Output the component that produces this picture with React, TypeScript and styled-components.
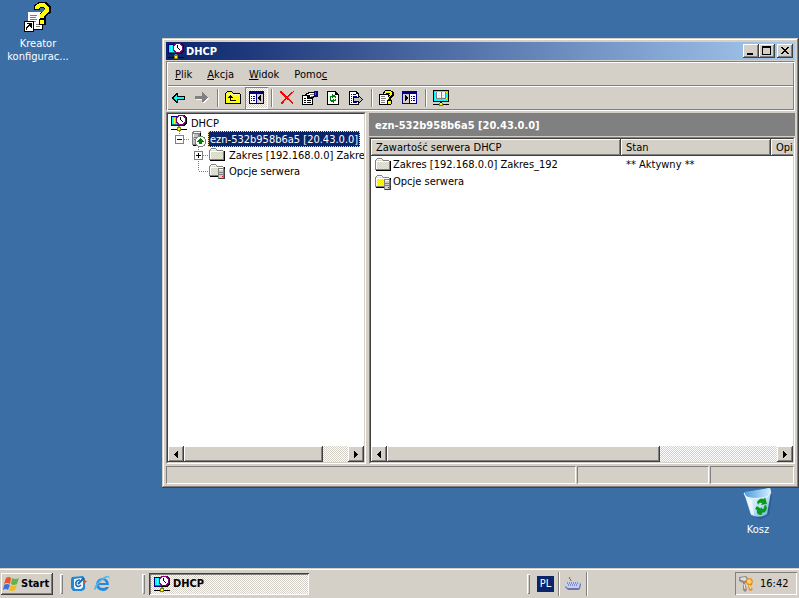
import React from "react";
import styled, { createGlobalStyle, css } from "styled-components";

const face = "#d4d0c8";
const shadow = "#808080";
const dark = "#404040";
const navy = "#0a246a";

const GlobalStyle = createGlobalStyle`
  * { box-sizing: border-box; }
  body {
    margin: 0;
    background: #3a6ea5;
    color: #000;
    font: 11px/16px "DejaVu Sans Condensed", "DejaVu Sans", sans-serif;
    overflow: hidden;
  }
  button { font: inherit; color: inherit; padding: 0; margin: 0; border: 0; background: none; border-radius: 0; }
  svg { display: block; flex: none; }
`;

const raised = css`
  background-color: ${face};
  box-shadow: inset -1px -1px ${dark}, inset 1px 1px #fff, inset -2px -2px ${shadow};
`;

const dither = css`
  background: repeating-conic-gradient(#fff 0 25%, ${face} 0 50%) 0 0 / 2px 2px;
`;

const sunken = css`
  border: 1px solid ${shadow};
  border-right-color: #fff;
  border-bottom-color: #fff;
`;

const Screen = styled.div`
  display: flex;
  flex-direction: column;
  height: 100vh;
`;

const Desktop = styled.main`
  position: relative;
  flex: 1;
  min-height: 0;
`;

const Shortcut = styled.a<{ $corner: "start" | "end" }>`
  position: absolute;
  ${(p) => (p.$corner === "start" ? "left: 0; top: 2px;" : "right: 3px; bottom: 32px;")}
  width: 76px;
  display: flex;
  flex-direction: column;
  align-items: center;
  gap: 3px;
  color: #fff;
  text-align: center;
  text-decoration: none;
  line-height: 13px;
`;

const Window = styled.section`
  position: absolute;
  inset: 38px 0 80px 162px;
  display: flex;
  flex-direction: column;
  padding: 4px;
  background: ${face};
  box-shadow: inset -1px -1px ${dark}, inset 1px 1px ${face}, inset -2px -2px ${shadow}, inset 2px 2px #fff;
`;

const TitleBar = styled.header`
  display: flex;
  align-items: center;
  height: 18px;
  padding: 0 2px;
  gap: 2px;
  background: linear-gradient(90deg, ${navy}, #a6caf0);
`;

const Title = styled.h1`
  flex: 1;
  margin: 0;
  padding-top: 2px;
  color: #fff;
  font-size: 11px;
  font-weight: bold;
`;

const CaptionButtons = styled.div`
  display: flex;
`;

const CaptionButton = styled.button<{ $apart?: boolean }>`
  ${raised}
  width: 16px;
  height: 14px;
  margin-left: ${(p) => (p.$apart ? 2 : 0)}px;
`;

const Bars = styled.div`
  ${sunken}
  margin-top: 1px;
  box-shadow: inset 1px 1px #fff, inset -1px -1px ${shadow};
  padding: 1px;
`;

const MenuBar = styled.nav`
  display: flex;
  align-items: center;
  gap: 1px;
  height: 22px;
`;

const MenuItem = styled.button`
  padding: 2px 7px 0;
  height: 20px;
`;

const ToolBar = styled.div`
  display: flex;
  align-items: center;
  height: 24px;
  border-top: 1px solid ${shadow};
  box-shadow: inset 0 1px #fff;
`;

const ToolButton = styled.button<{ $pressed?: boolean }>`
  display: grid;
  place-items: center;
  width: 23px;
  height: 22px;
  padding-right: 2px;
  ${(p) => p.$pressed && css`${dither} padding-right: 0; box-shadow: inset 1px 1px ${shadow}, inset -1px -1px #fff;`}
`;

const ToolSeparator = styled.span`
  width: 2px;
  height: 18px;
  margin: 0 3px;
  border-left: 1px solid ${shadow};
  border-right: 1px solid #fff;
`;

const Panes = styled.div`
  flex: 1;
  min-height: 0;
  display: grid;
  grid-template-columns: 200px minmax(0, 1fr);
  gap: 3px;
  margin-top: 1px;
`;

const Pane = styled.div`
  ${sunken}
  flex: 1;
  display: flex;
  flex-direction: column;
  min-width: 0;
  min-height: 0;
  background: #fff;
`;

const PaneBody = styled.div`
  flex: 1;
  display: flex;
  flex-direction: column;
  min-height: 0;
  overflow: hidden;
  border: 1px solid ${dark};
  border-right-color: ${face};
  border-bottom-color: ${face};
`;

const RightPane = styled.div`
  display: flex;
  flex-direction: column;
  min-width: 0;
  min-height: 0;
`;

const PaneTitle = styled.h2`
  margin: 1px 0;
  height: 23px;
  padding-left: 6px;
  background: ${shadow};
  color: #fff;
  font-size: 11px;
  line-height: 25px;
`;

const Tree = styled.ul`
  flex: 1;
  min-height: 0;
  margin: 0;
  padding: 1px 0 0 3px;
  list-style: none;
  overflow: hidden;
`;

const TreeRow = styled.li<{ $level: number }>`
  display: flex;
  align-items: center;
  height: 16px;
  padding-left: ${(p) => Math.max(0, p.$level - 1) * 19}px;
  white-space: nowrap;
`;

const TreeLabel = styled.span<{ $selected?: boolean }>`
  height: 16px;
  margin-left: 2px;
  padding: 2px 2px 0;
  line-height: 14px;
  ${(p) => p.$selected && css`background: ${navy}; color: #fff; outline: 1px dotted #f5db95; outline-offset: -1px;`}
`;

const ListArea = styled.div`
  flex: 1;
  min-height: 0;
  overflow: hidden;
`;

const ListTable = styled.table`
  table-layout: fixed;
  border-collapse: collapse;
  width: 100%;
  min-width: 560px;
`;

const HeadCell = styled.th<{ $width?: number }>`
  ${raised}
  width: ${(p) => (p.$width ? `${p.$width}px` : "auto")};
  height: 17px;
  padding: 1px 5px 0;
  text-align: left;
  font-weight: normal;
  line-height: 16px;
`;

const Cell = styled.td`
  height: 17px;
  padding: 1px 5px 0;
  line-height: 16px;
  white-space: nowrap;
`;

const FileCell = styled(Cell)`
  padding-left: 4px;
`;

const FileName = styled.div`
  display: flex;
  align-items: center;
  gap: 2px;
  height: 16px;
`;

const ScrollBar = styled.div`
  display: flex;
  height: 16px;
  ${dither}
`;

const ScrollArrow = styled.button`
  ${raised}
  display: grid;
  place-items: center;
  width: 16px;
  height: 16px;
`;

const Track = styled.div`
  flex: 1;
`;

const Thumb = styled.div<{ $share: number }>`
  ${raised}
  width: ${(p) => p.$share}%;
  height: 16px;
`;

const StatusBar = styled.footer`
  display: grid;
  grid-template-columns: minmax(0, 1fr) 132px 84px;
  gap: 1px;
  height: 18px;
  margin-top: 2px;
  padding-right: 1px;
`;

const StatusCell = styled.div`
  ${sunken}
`;

const TaskBar = styled.footer`
  display: flex;
  align-items: center;
  height: 30px;
  padding: 1px 2px 0 1px;
  background: ${face};
  box-shadow: inset 0 1px ${face}, inset 0 2px #fff;
`;

const StartButton = styled.button`
  ${raised}
  display: flex;
  align-items: center;
  gap: 2px;
  width: 52px;
  height: 22px;
  padding-left: 2px;
  font-weight: bold;
`;

const Grip = styled.span`
  width: 3px;
  height: 20px;
  margin: 0 7px;
  box-shadow: inset 1px 1px #fff, inset -1px -1px ${shadow};
`;

const QuickLaunch = styled.div`
  display: flex;
  align-items: center;
  gap: 7px;
  width: 65px;
`;

const TaskButton = styled.button`
  ${dither}
  display: flex;
  align-items: center;
  gap: 3px;
  width: 160px;
  height: 22px;
  margin-left: -3px;
  padding-left: 5px;
  font-weight: bold;
  box-shadow: inset 1px 1px ${dark}, inset -1px -1px #fff, inset 2px 2px ${shadow};
`;

const Spacer = styled.div`
  flex: 1;
`;

const LanguageBar = styled.div`
  display: flex;
  align-items: center;
`;

const Language = styled.button`
  width: 17px;
  height: 16px;
  margin-right: 4px;
  background: ${navy};
  color: #fff;
  text-align: center;
`;

const KeyboardSlot = styled.div`
  display: grid;
  place-items: center;
  width: 29px;
  height: 24px;
  border-left: 1px solid ${shadow};
  border-right: 1px solid ${shadow};
  box-shadow: inset 1px 0 #fff, 1px 0 #fff;
`;

const Tray = styled.div`
  display: flex;
  align-items: center;
  gap: 6px;
  width: 62px;
  height: 23px;
  margin-left: 148px;
  padding-left: 3px;
  box-shadow: inset 1px 1px ${shadow}, inset -1px -1px #fff;
`;

const HiddenDefs = styled.svg`
  position: absolute;
`;

type ArtProps = { w: number; h: number; children: React.ReactNode };
const Art = ({ w, h, children }: ArtProps) => (
  <svg width={w} height={h} viewBox={`0 0 ${w} ${h}`} shapeRendering="crispEdges" aria-hidden="true">
    {children}
  </svg>
);

const Patterns = () => (
  <HiddenDefs width="0" height="0" aria-hidden="true">
    <defs>
      <pattern id="folderFill" width="2" height="2" patternUnits="userSpaceOnUse">
        <path fill="#ffff00" d="M0 0h2v2H0z" />
        <path fill="#d8d8c8" d="M0 0h1v1H0zM1 1h1v1H1z" />
      </pattern>
      <linearGradient id="binFill" x1="0" y1="0" x2="1" y2="1">
        <stop offset="0" stopColor="#f4fcff" />
        <stop offset="0.55" stopColor="#c4e6f9" />
        <stop offset="1" stopColor="#5fa6dc" />
      </linearGradient>
      <linearGradient id="binMouth" x1="0" y1="0" x2="1" y2="0">
        <stop offset="0" stopColor="#4a9be0" />
        <stop offset="1" stopColor="#d4effc" />
      </linearGradient>
    </defs>
  </HiddenDefs>
);

const DhcpIcon = () => (
  <Art w={16} h={16}>
    <path fill="#000080" d="M0 1h9v10H0z" />
    <path fill="#00ffff" d="M1 2h8v8H1z" />
    <path fill="#ffff00" d="M3 3h1v6H3z" />
    <path fill="#008080" d="M1 9h6v1H1z" />
    <path fill="#000" d="M8 0h6v1h1v1h1v7h-1v1h-1v1H8v-1H7V9H6V2h1V1h1z" />
    <path fill="#800080" d="M7 0h6v1h1v1h1v6h-1v1h-1v1H7V9H6V8H5V2h1V1h1z" />
    <path fill="#fff" d="M8 1h4v1h1v1h1v4h-1v1h-1v1H8V8H7V7H6V3h1V2h1z" />
    <path fill="#000" d="M9 2h1v3H9zM10 5h1v1h-1zM11 6h1v1h-1z" />
    <path fill="#808080" d="M7 11h2v1H7z" />
    <path fill="#000" d="M0 14h16v1H0z" />
    <path fill="#808000" d="M6 12h4v4H6z" />
    <path fill="#ffff00" d="M7 13h2v2H7z" />
  </Art>
);

const ServerIcon = () => (
  <Art w={16} h={16}>
    <path fill="#808080" d="M3 0h7l1 1v13H2V2z" />
    <path fill="#c0c0c0" d="M3 3h6v10H3z" />
    <path fill="#fff" d="M4 1h6v1H4zM3 3h1v3H3z" />
    <path fill="#808080" d="M4 6h4v1H4zM4 8h4v1H4zM8 3h1v10H8z" />
    <path fill="#000" d="M10 2h1v4h-1zM3 14h4v1H3z" />
    <path fill="#808080" d="M8 5h5v1h2v2h1v5h-1v2h-2v1H8v-1H6v-2H5V8h1V6h2z" />
    <path fill="#fff" d="M8 6h5v1h1v1h1v5h-1v1h-1v1H8v-1H7v-1H6V8h1V7h1z" />
    <path fill="#008000" d="M10 7h1v1h1v1h1v1h1v1h-2v2H9v-2H7v-1h1V9h1V8h1z" />
  </Art>
);

const FolderIcon = ({ server }: { server?: boolean }) => (
  <Art w={16} h={16}>
    <path fill="#808080" d="M1 2h1V1h5v1h1v1h6v1h1v9H0V3h1z" />
    <path fill="url(#folderFill)" d="M2 2h5v1h1v1h6v8H1V3h1z" />
    <path fill="#fff" d="M2 2h5v1H2zM1 4h13v1H2v7H1z" />
    <path fill="#000" d="M15 4h1v10H1v-1h14z" />
    {server && (
      <>
        <path fill="#808080" d="M9 5h6v1h1v9h-1v1H9z" />
        <path fill="#d4d0c8" d="M10 6h4v9h-4z" />
        <path fill="#fff" d="M10 6h4v1h-4z" />
        <path fill="#808080" d="M10 9h4v1h-4zM10 11h4v1h-4z" />
        <path fill="#f00" d="M13 13h1v1h-1z" />
        <path fill="#404040" d="M15 6h1v10h-6v-1h5z" />
      </>
    )}
  </Art>
);

const BackIcon = () => (
  <Art w={13} h={10}>
    <path fill="#000" d="M4 0h2v3h7v4H6v3H4V9H3V8H2V7H1V6H0V4h1V3h1V2h1V1h1z" />
    <path fill="#00ffff" d="M4 2h1v2h7v2H5v2H4V7H3V6H2V4h1V3h1z" />
  </Art>
);

const ForwardIcon = () => (
  <Art w={14} h={11}>
    <path fill="#fff" d="M8 1h1v1h1v1h1v1h1v1h1v1h1v1h-1v1h-1v1h-1v1h-1v1H8V8H1V7h7z" />
    <path fill="#808080" d="M7 0h1v1h1v1h1v1h1v1h1v1h1v1h-1v1h-1v1h-1v1H9v1H7V7H0V4h7z" />
  </Art>
);

const UpIcon = () => (
  <Art w={16} h={14}>
    <path fill="#000" d="M2 0h5v1h1v1h7v1h1v10H0V2h1V1h1z" />
    <path fill="#ffff00" d="M2 1h5v1h1v1h7v9H1V2h1z" />
    <path fill="#fff" d="M2 3h12v1H2z" opacity=".6" />
    <path fill="#000" d="M5 4h1v1h1v1h1v1H6v2h5v1H5V7H3V6h1V5h1z" />
  </Art>
);

const PaneIcon = ({ mirrored }: { mirrored?: boolean }) => (
  <Art w={15} h={13}>
    <path fill="#000080" d="M0 0h15v13H0z" />
    <path fill="#fff" d="M1 3h6v9H1zM8 3h6v9H8z" />
    <path fill="#d4d0c8" d={mirrored ? "M1 3h6v9H1z" : "M8 3h6v9H8z"} />
    {mirrored ? (
      <>
        <path fill="#000" d="M3 4h1v1h1v1h1v2H5v1H4v1H3z" />
        <path fill="#000080" d="M9 5h1v1H9zM11 5h2v1h-2zM9 7h1v1H9zM11 7h2v1h-2zM9 9h1v1H9zM11 9h2v1h-2z" />
      </>
    ) : (
      <>
        <path fill="#000" d="M12 4h-1v1h-1v1H9v2h1v1h1v1h1z" />
        <path fill="#000080" d="M2 5h1v1H2zM4 5h2v1H4zM2 7h1v1H2zM4 7h2v1H4zM2 9h1v1H2zM4 9h2v1H4z" />
      </>
    )}
  </Art>
);

const DeleteIcon = () => (
  <Art w={14} h={14}>
    <path fill="#f00" d="M0 0h2v1h1v1h1v1h1v1h1v1h2V4h1V3h1V2h1V1h2V0h1v1h-1v1h-1v1h-1v1h-1v1H9v1H8v1h1v1h1v1h1v1h1v1h1v2h-1v-1h-1v-1h-1v-1H9v-1H8V9H7V8H6v1H5v1H4v2H3v1H1v-2h1v-1h1V9h1V8h1V6H4V5H3V4H2V3H1V2H0z" />
  </Art>
);

const PropertiesIcon = () => (
  <Art w={16} h={14}>
    <path fill="#000" d="M0 4h11v10H0z" />
    <path fill="#fff" d="M1 5h9v8H1z" />
    <path fill="#000" d="M2 7h2v1H2zM5 7h4v1H5zM2 9h2v1H2zM5 9h4v1H5zM2 11h2v1H2zM5 11h4v1H5z" />
    <path fill="#000" d="M4 2h2V1h6v1h1v4h-1v1h-1v1H8V7H5V5H3V3h1z" />
    <path fill="#fff" d="M5 3h2V2h5v3h-1v1H8V4H5z" />
    <path fill="#808080" d="M8 3h4v1H8zM9 5h2v1H9z" />
    <path fill="#000080" d="M12 0h4v6h-3V5h-1z" />
    <path fill="#4060e0" d="M13 1h1v3h-1z" />
  </Art>
);

const RefreshIcon = () => (
  <Art w={12} h={14}>
    <path fill="#000" d="M0 0h9v1h1v1h1v1h1v11H0z" />
    <path fill="#fff" d="M1 1h7v3h3v9H1z" />
    <path fill="#000" d="M8 1h1v2h2v1H8z" />
    <path fill="#008000" d="M5 3h1v1h2v1h1v2H8V6H6v1H5V6H4V5h1zM3 5h1v1H3zM3 6h1v2H3zM3 8h1v1h2V8h1v1h1v1H7v2H6v-1H4v-1H3zM8 8h1v2H8z" />
  </Art>
);

const ExportIcon = () => (
  <Art w={14} h={14}>
    <path fill="#000" d="M0 0h8v1h1v1h1v12H0z" />
    <path fill="#fff" d="M1 1h6v2h2v10H1z" />
    <path fill="#000080" d="M2 3h1v1H2zM4 3h3v1H4zM2 5h1v1H2zM4 5h4v1H4zM2 7h1v1H2zM2 9h1v1H2zM2 11h1v1H2zM4 11h4v1H4z" />
    <path fill="#000" d="M4 6h5V4h1v1h1v1h1v1h1v1h1v1h-1v1h-1v1h-1v1h-1v1H9v-2H4z" />
    <path fill="#c0c0c0" d="M5 7h5V6h1v1h1v1h1v1h-1v1h-1v1h-1v-1H5z" />
  </Art>
);

const HelpDocIcon = () => (
  <Art w={15} h={15}>
    <path fill="#000" d="M0 4h10v11H0z" />
    <path fill="#fff" d="M1 5h8v9H1z" />
    <path fill="#808080" d="M2 6h4v1H2zM2 8h5v1H2zM2 10h4v1H2zM2 12h4v1H2z" />
    <path fill="#000" d="M6 0h6v1h2v1h1v4h-1v1h-1v1h-1v2h1v4h-1v1H8v-5h1V7h1V5h1V4H8v1H4V2h1V1h1z" />
    <path fill="#ffff00" d="M6 1h6v1h1v3h-1v1h-1v1h-1v2H9V7h1V6h1V3H7v1H5V3h1zM9 11h3v3H9z" />
  </Art>
);

const MonitorIcon = () => (
  <Art w={16} h={16}>
    <path fill="#000" d="M0 0h16v12H0z" />
    <path fill="#00ffff" d="M1 1h14v10H1z" />
    <path fill="#ffff00" d="M2 2h1v1H2zM13 2h1v1h-1zM2 8h1v1H2zM13 8h1v1h-1z" />
    <path fill="#808080" d="M3 2h10v7H3z" />
    <path fill="#fff" d="M4 2h4v6H4zM9 2h3v6H9z" />
    <path fill="#ffff00" d="M5 3h2v1H5zM9 3h2v1H9zM5 5h2v1H5zM9 5h2v1H9zM5 7h2v1H5zM9 7h2v1H9z" />
    <path fill="#000" d="M7 12h2v2H7zM0 14h16v1H0z" />
    <path fill="#808000" d="M6 13h4v3H6z" />
    <path fill="#ffff00" d="M7 13h2v2H7z" />
  </Art>
);

const WizardIcon = () => (
  <Art w={28} h={32}>
    <path fill="#000" d="M5 11h14v17H5z" />
    <path fill="#fff" d="M4 10h14v17H4z" />
    <path fill="#808080" d="M6 13h7v1H6zM6 15h6v1H6zM6 17h7v1H6zM6 19h6v1H6zM12 22h4v1h-4zM12 24h4v1h-4z" />
    <g fill="none" strokeLinejoin="round">
      <path stroke="#000" strokeWidth="6" d="M13 8V5l3-2h5l3 3v3l-5 4v4" />
      <path stroke="#ffff00" strokeWidth="4" d="M13 7V5l3-2h4l3 3v3l-5 4v3" />
    </g>
    <path fill="#000" d="M15 17h7v6h-7z" />
    <path fill="#ffff00" d="M16 18h4v4h-4z" />
    <path fill="#000" d="M0 19h10v11H0z" />
    <path fill="#fff" d="M1 20h8v9H1z" />
    <path fill="#000" d="M3 21h5v5H7v-1H6v-1H5v1H4v1H3v2H2v-3h1v-1h1v-1h1v-1H3z" />
  </Art>
);

const BinIcon = () => (
  <svg width="32" height="32" viewBox="0 0 32 32" aria-hidden="true">
    <path d="M28 5l2 2-3 20-8 4-6-2 12-2z" fill="#205080" opacity=".55" />
    <path d="M2 5L28 0l1 4-4 22q-7 5-16 1z" fill="url(#binFill)" />
    <path d="M2 4L28 0l1 4-4 4q-11 4-19 1-4-2-4-5z" fill="url(#binMouth)" />
    <path d="M2 5l2 4q9 3 21 0l4-5" fill="none" stroke="#e9f8ff" />
    <path d="M5 11l4 15 3 1-2-15z" fill="#fff" opacity=".6" />
    <path
      d="M15 14q3-5 7-3l1-2 2 7-6 1 1-2q-3-1-4 2zM24 17q2 4-1 7l-3 1v2l-4-4 4-4v2q3 0 2-3zM15 18l4 3-2 1q0 2 2 3v2q-5 0-4-5l-2-1z"
      fill="#0a9b1a"
    />
  </svg>
);

const StartIcon = () => (
  <svg width="16" height="16" viewBox="0 0 16 16" aria-hidden="true">
    <path d="M3 2q3-2 5 0L7 8Q4 6 1 8z" fill="#e8542c" />
    <path d="M9 2q3 2 7 0l-2 6q-3 2-6 0z" fill="#67b346" />
    <path d="M1 9q3-2 6 0l-2 5q-2-2-5 0z" fill="#3c72d8" />
    <path d="M8 9q3 2 6 0l-2 5q-3 2-6 0z" fill="#f3b91d" />
  </svg>
);

const DesktopIcon = () => (
  <svg width="17" height="17" viewBox="0 0 17 17" aria-hidden="true">
    <path d="M2 2l11-1 2 3v10l-3 2H3l-2-3V4z" fill="#2587d4" />
    <path d="M4 4l7-1 2 2v7l-2 2H5l-1-2z" fill="#eff8ff" />
    <path d="M10 5Q5 5 6 10q2 3 5 0" fill="none" stroke="#1766ae" strokeWidth="1.5" />
    <path d="M8 9l6-6" stroke="#1766ae" strokeWidth="2" />
    <path d="M13 5l4 1-3 3z" fill="#dd4b2a" />
  </svg>
);

const ExplorerIcon = () => (
  <svg width="17" height="17" viewBox="0 0 17 17" aria-hidden="true">
    <path d="M15 10H5q0 3 4 3 2 0 3-1h3q-2 4-6 4-7-1-7-7 1-6 7-6 6 1 6 7zM5 8h7q-1-3-3-3-4 0-4 3z" fill="#2389df" />
    <path d="M2 14Q-1 17 1 11 5 4 12 1q5-1 3 4 1-4-3-2Q5 6 2 14z" fill="#54b4ee" />
  </svg>
);

const KeyboardIcon = () => (
  <svg width="17" height="15" viewBox="0 0 17 15" aria-hidden="true">
    <path d="M7 6V4q-3-2-1-3" fill="none" stroke="#666" />
    <path d="M1 6h14l2 2-1 5-2 1H4l-3-3z" fill="#6b74ad" />
    <path d="M1 5h14l1 2-1 5H4L1 10z" fill="#c5cdf5" />
    <path d="M3 7h11M4 9h10" stroke="#465087" strokeDasharray="1 1" />
  </svg>
);

const KeysIcon = () => (
  <svg width="16" height="16" viewBox="0 0 16 16" aria-hidden="true">
    <path d="M1 1l7-1 2 2v4L7 7l2 7-2 2-2-2V7L1 5z" fill="#8b8b8b" />
    <path d="M2 2l5-1 2 2-2 2-4-1z" fill="#dedede" />
    <path d="M8 3l5-1 2 3-1 4-2 1 3 3-2 2-2-1-1-5-2-2z" fill="#e88b16" />
    <path d="M9 4l3-1 2 3-2 2-3-1z" fill="#ffd061" />
    <path d="M6 8l1 5M11 9l2 4" stroke="#fff3c8" />
  </svg>
);

const Arrow = ({ right }: { right?: boolean }) => (
  <Art w={4} h={7}>
    <path fill="#000" d={right ? "M0 0h1v1h1v1h1v1h1v1H3v1H2v1H1v1H0z" : "M4 0H3v1H2v1H1v1H0v1h1v1h1v1h1v1h1z"} />
  </Art>
);

type Branch = { box?: "+" | "-"; down?: boolean };
const BranchArt = ({ box, down }: Branch) => (
  <Art w={19} h={16}>
    <path d={`M8.5 0V${down ? 16 : 8}M9 8.5H19`} stroke="#808080" strokeDasharray="1 1" fill="none" />
    {box && (
      <>
        <path fill="#808080" d="M4 4h9v9H4z" />
        <path fill="#fff" d="M5 5h7v7H5z" />
        <path fill="#000" d={box === "+" ? "M6 8h5v1H6zM8 6h1v5H8z" : "M6 8h5v1H6z"} />
      </>
    )}
  </Art>
);

const HorizontalScroll = ({ share }: { share: number }) => (
  <ScrollBar>
    <ScrollArrow aria-label="Przewiń w lewo"><Arrow /></ScrollArrow>
    <Track><Thumb $share={share} /></Track>
    <ScrollArrow aria-label="Przewiń w prawo"><Arrow right /></ScrollArrow>
  </ScrollBar>
);

export default function App() {
  return (
    <Screen>
      <GlobalStyle />
      <Patterns />
      <Desktop>
        <Shortcut $corner="start" href="#kreator">
          <WizardIcon />
          <span>Kreator konfigurac...</span>
        </Shortcut>
        <Shortcut $corner="end" href="#kosz">
          <BinIcon />
          <span>Kosz</span>
        </Shortcut>
        <Window aria-label="DHCP">
          <TitleBar>
            <DhcpIcon />
            <Title>DHCP</Title>
            <CaptionButtons>
              <CaptionButton aria-label="Minimalizuj">
                <Art w={16} h={14}><path d="M4 9h6v2H4z" /></Art>
              </CaptionButton>
              <CaptionButton aria-label="Maksymalizuj">
                <Art w={16} h={14}><path fillRule="evenodd" d="M3 2h9v9H3zM4 4v6h7V4z" /></Art>
              </CaptionButton>
              <CaptionButton $apart aria-label="Zamknij">
                <Art w={16} h={14}>
                  <path d="M4 3h2v1h1v1h2V4h1V3h2v1h-1v1h-1v1H9v1h1v1h1v1h1v1h-2V9H9V8H7v1H6v1H4V9h1V8h1V7h1V6H6V5H5V4H4z" />
                </Art>
              </CaptionButton>
            </CaptionButtons>
          </TitleBar>
          <Bars>
            <MenuBar>
              <MenuItem><u>P</u>lik</MenuItem>
              <MenuItem><u>A</u>kcja</MenuItem>
              <MenuItem><u>W</u>idok</MenuItem>
              <MenuItem>Pomo<u>c</u></MenuItem>
            </MenuBar>
            <ToolBar role="toolbar">
              <ToolButton aria-label="Wstecz"><BackIcon /></ToolButton>
              <ToolButton aria-label="Dalej"><ForwardIcon /></ToolButton>
              <ToolSeparator />
              <ToolButton aria-label="W górę"><UpIcon /></ToolButton>
              <ToolButton $pressed aria-label="Pokaż drzewo"><PaneIcon /></ToolButton>
              <ToolSeparator />
              <ToolButton aria-label="Usuń"><DeleteIcon /></ToolButton>
              <ToolButton aria-label="Właściwości"><PropertiesIcon /></ToolButton>
              <ToolButton aria-label="Odśwież"><RefreshIcon /></ToolButton>
              <ToolButton aria-label="Eksportuj listę"><ExportIcon /></ToolButton>
              <ToolSeparator />
              <ToolButton aria-label="Pomoc"><HelpDocIcon /></ToolButton>
              <ToolButton aria-label="Okienko akcji"><PaneIcon mirrored /></ToolButton>
              <ToolSeparator />
              <ToolButton aria-label="Serwer"><MonitorIcon /></ToolButton>
            </ToolBar>
          </Bars>
          <Panes>
            <Pane>
              <PaneBody>
                <Tree>
                  <TreeRow $level={0}><DhcpIcon /><TreeLabel>DHCP</TreeLabel></TreeRow>
                  <TreeRow $level={1}>
                    <BranchArt box="-" />
                    <ServerIcon />
                    <TreeLabel $selected>ezn-532b958b6a5 [20.43.0.0]</TreeLabel>
                  </TreeRow>
                  <TreeRow $level={2}>
                    <BranchArt box="+" down />
                    <FolderIcon />
                    <TreeLabel>Zakres [192.168.0.0] Zakres_192</TreeLabel>
                  </TreeRow>
                  <TreeRow $level={2}>
                    <BranchArt />
                    <FolderIcon server />
                    <TreeLabel>Opcje serwera</TreeLabel>
                  </TreeRow>
                </Tree>
                <HorizontalScroll share={85} />
              </PaneBody>
            </Pane>
            <RightPane>
              <PaneTitle>ezn-532b958b6a5 [20.43.0.0]</PaneTitle>
              <Pane>
                <PaneBody>
                  <ListArea>
                    <ListTable>
                      <thead>
                        <tr>
                          <HeadCell $width={250}>Zawartość serwera DHCP</HeadCell>
                          <HeadCell $width={150}>Stan</HeadCell>
                          <HeadCell>Opis</HeadCell>
                        </tr>
                      </thead>
                      <tbody>
                        <tr>
                          <FileCell><FileName><FolderIcon />Zakres [192.168.0.0] Zakres_192</FileName></FileCell>
                          <Cell>** Aktywny **</Cell>
                          <Cell />
                        </tr>
                        <tr>
                          <FileCell><FileName><FolderIcon server />Opcje serwera</FileName></FileCell>
                          <Cell />
                          <Cell />
                        </tr>
                      </tbody>
                    </ListTable>
                  </ListArea>
                  <HorizontalScroll share={70} />
                </PaneBody>
              </Pane>
            </RightPane>
          </Panes>
          <StatusBar>
            <StatusCell />
            <StatusCell />
            <StatusCell />
          </StatusBar>
        </Window>
      </Desktop>
      <TaskBar>
        <StartButton><StartIcon />Start</StartButton>
        <Grip />
        <QuickLaunch><DesktopIcon /><ExplorerIcon /></QuickLaunch>
        <Grip />
        <TaskButton><DhcpIcon />DHCP</TaskButton>
        <Spacer />
        <LanguageBar>
          <Grip />
          <Language>PL</Language>
          <KeyboardSlot><KeyboardIcon /></KeyboardSlot>
        </LanguageBar>
        <Tray><KeysIcon />16:42</Tray>
      </TaskBar>
    </Screen>
  );
}
